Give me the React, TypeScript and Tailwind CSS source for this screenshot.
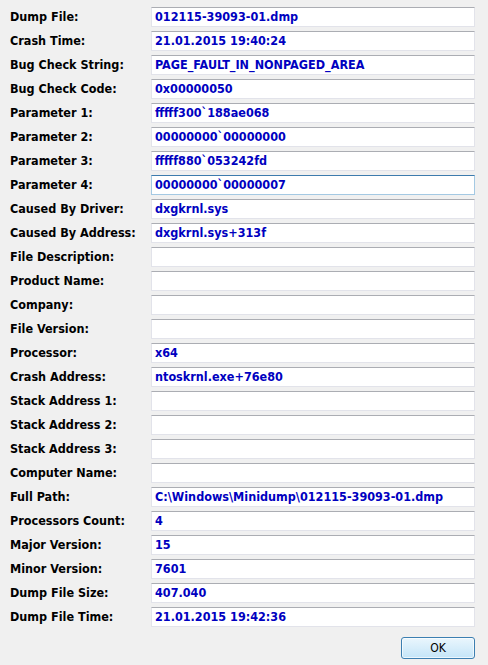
import React from "react";

const rows: [string, string][] = [
  ["Dump File:", "012115-39093-01.dmp"],
  ["Crash Time:", "21.01.2015 19:40:24"],
  ["Bug Check String:", "PAGE_FAULT_IN_NONPAGED_AREA"],
  ["Bug Check Code:", "0x00000050"],
  ["Parameter 1:", "fffff300`188ae068"],
  ["Parameter 2:", "00000000`00000000"],
  ["Parameter 3:", "fffff880`053242fd"],
  ["Parameter 4:", "00000000`00000007"],
  ["Caused By Driver:", "dxgkrnl.sys"],
  ["Caused By Address:", "dxgkrnl.sys+313f"],
  ["File Description:", ""],
  ["Product Name:", ""],
  ["Company:", ""],
  ["File Version:", ""],
  ["Processor:", "x64"],
  ["Crash Address:", "ntoskrnl.exe+76e80"],
  ["Stack Address 1:", ""],
  ["Stack Address 2:", ""],
  ["Stack Address 3:", ""],
  ["Computer Name:", ""],
  ["Full Path:", "C:\\Windows\\Minidump\\012115-39093-01.dmp"],
  ["Processors Count:", "4"],
  ["Major Version:", "15"],
  ["Minor Version:", "7601"],
  ["Dump File Size:", "407.040"],
  ["Dump File Time:", "21.01.2015 19:42:36"],
];

const font = {
  fontFamily: '"DejaVu Sans Condensed", "DejaVu Sans", sans-serif',
  fontStretch: "condensed" as const,
};

export default function App() {
  return (
    <div className="w-[488px] h-[665px] bg-[#f0f0f0] pt-[7px] pl-[10px] flex flex-col">
      <div className="grid grid-cols-[141px_324px] gap-y-[4px]" style={font}>
        {rows.map(([label, value], i) => {
          const focused = i === 7;
          return (
            <React.Fragment key={label}>
              <div className="h-[20px] flex items-center text-[12.5px] font-bold text-black whitespace-nowrap">
                {label}
              </div>
              <div
                className={
                  "h-[20px] bg-white border flex items-center pl-[3px] text-[12.5px] font-bold text-[#0000c0] whitespace-nowrap overflow-hidden " +
                  (focused
                    ? "border-[#a4c9e3] border-t-[#3d7bad]"
                    : "border-[#e2e3ea] border-t-[#abadb3]")
                }
              >
                {value}
              </div>
            </React.Fragment>
          );
        })}
      </div>
      <div className="flex justify-end pr-[13px] mt-[10px]">
        <button
          className="w-[74px] h-[22px] rounded-[3px] border border-[#3c7fb1] bg-gradient-to-b from-[#eaf6fd] to-[#c4e5f8] text-[12px] text-black flex items-center justify-center shadow-[inset_0_0_0_1px_#ffffffaa]"
          style={font}
        >
          OK
        </button>
      </div>
    </div>
  );
}
